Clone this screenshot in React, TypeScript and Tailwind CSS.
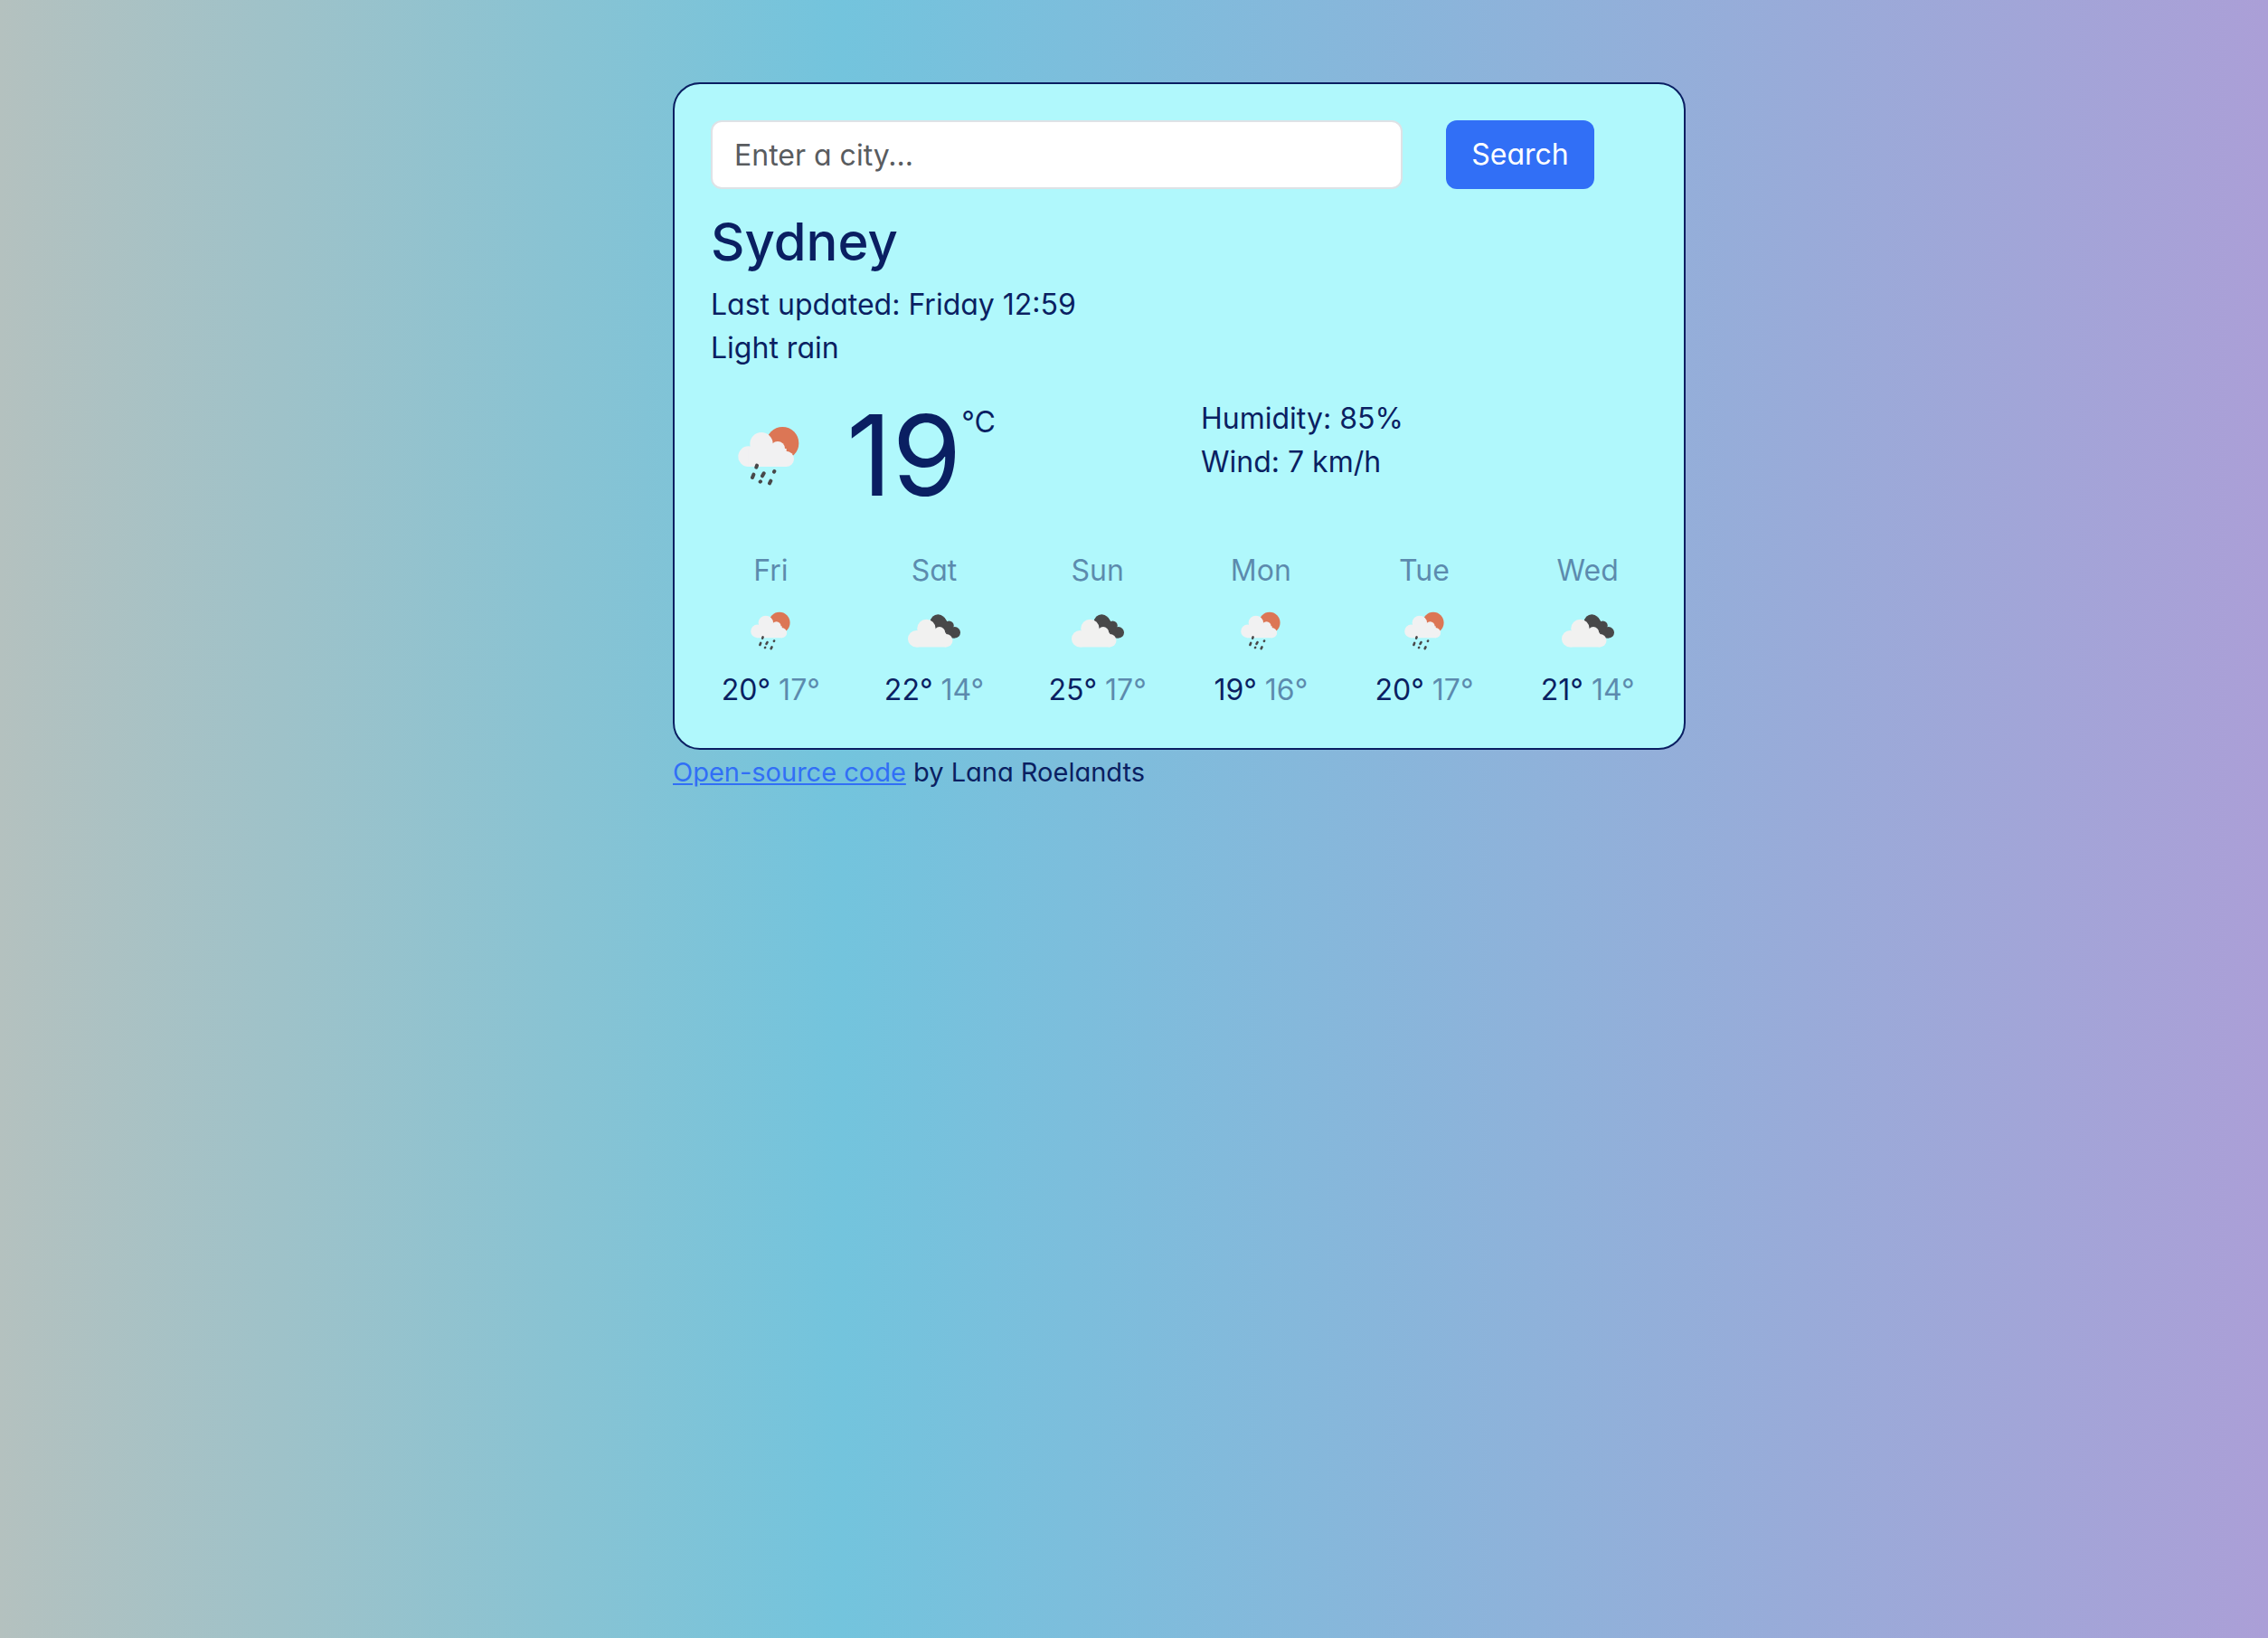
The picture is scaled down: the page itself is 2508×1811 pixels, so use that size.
import React from "react";

type Kind = "rain" | "clouds";

function Rain({ className }: { className: string }) {
  return (
    <svg viewBox="0 0 204 198" className={className} role="img" aria-label="Light rain">
      <circle cx="148" cy="57" r="54" fill="#dc7655" />
      <g fill="#f1f1f2">
        <circle cx="35" cy="101" r="34" />
        <circle cx="78" cy="59" r="38" />
        <circle cx="132" cy="75" r="24" />
        <circle cx="160" cy="109" r="26" />
        <rect x="35" y="75" width="126" height="60" />
      </g>
      <g stroke="#484849" strokeWidth="12" strokeLinecap="round">
        <path d="M63 131l-2 6M52 161l-4 10M86 157l-5 9M121 150l-1 2M75 184l-1 1M109 182l-4 8" />
      </g>
    </svg>
  );
}

function Clouds({ className }: { className: string }) {
  return (
    <svg viewBox="0 0 176 111" className={className} role="img" aria-label="Broken clouds">
      <g fill="#484849">
        <circle cx="101" cy="26" r="26" />
        <circle cx="138" cy="38" r="16" />
        <circle cx="157" cy="61" r="19" />
        <path d="M84 30L122 10L150 50L157 80H120Z" />
      </g>
      <g fill="#f1f1f0">
        <circle cx="28" cy="82" r="28" />
        <circle cx="62" cy="48" r="31" />
        <circle cx="106" cy="61" r="19" />
        <circle cx="128" cy="88" r="22" />
        <rect x="28" y="62" width="100" height="48" />
      </g>
    </svg>
  );
}

const days: { day: string; kind: Kind; max: number; min: number }[] = [
  { day: "Fri", kind: "rain", max: 20, min: 17 },
  { day: "Sat", kind: "clouds", max: 22, min: 14 },
  { day: "Sun", kind: "clouds", max: 25, min: 17 },
  { day: "Mon", kind: "rain", max: 19, min: 16 },
  { day: "Tue", kind: "rain", max: 20, min: 17 },
  { day: "Wed", kind: "clouds", max: 21, min: 14 },
];

export default function App() {
  return (
    <div className="min-h-screen bg-[linear-gradient(90deg,#b4c1bf_0%,#73c4dd_37%,#ab9fd7_100%)] pt-[91px] pl-[100px] font-['Inter',sans-serif] text-[32px] leading-[48px] text-[#0a1f62] [font-feature-settings:'cv11']">
      <div className="mx-auto max-w-[1120px]">
        <main className="rounded-[30px] border-2 border-[#0a1f62] bg-[#b0f8fc] p-10">
          <form className="-mx-6 flex" onSubmit={(e) => e.preventDefault()}>
            <div className="w-3/4 px-6">
              <input
                type="search"
                aria-label="City"
                placeholder="Enter a city..."
                className="block h-[76px] w-full rounded-xl border-2 border-[#dee2e6] bg-white px-6 outline-none placeholder:text-[#595c5f]"
              />
            </div>
            <div className="w-1/4 px-6">
              <button type="submit" className="h-[76px] w-[164px] rounded-xl bg-[#316ff6] text-white">
                Search
              </button>
            </div>
          </form>
          <h1 className="mt-6 text-[58px] leading-[68px] font-medium">Sydney</h1>
          <ul className="mt-3">
            <li>Last updated: Friday 12:59</li>
            <li>Light rain</li>
          </ul>
          <div className="-mx-6 mt-[30px] flex">
            <div className="flex w-1/2 px-6">
              <Rain className="mt-8 ml-[30px] h-[66px] w-[68px] shrink-0" />
              <span className="ml-[52px] text-[124px] leading-[128px]">19</span>
              <span className="mt-1">°C</span>
            </div>
            <ul className="w-1/2 px-6">
              <li>Humidity: 85%</li>
              <li>Wind: 7 km/h</li>
            </ul>
          </div>
          <div className="-mx-6 mt-10 grid grid-cols-6 text-center">
            {days.map((d) => (
              <div key={d.day}>
                <div className="opacity-50">{d.day}</div>
                <div className="flex h-[84px] items-center justify-center">
                  {d.kind === "rain" ? <Rain className="h-[43px] w-[44px]" /> : <Clouds className="h-[37px] w-[58px]" />}
                </div>
                <div className="whitespace-nowrap">
                  {d.max}° <span className="opacity-50">{d.min}°</span>
                </div>
              </div>
            ))}
          </div>
        </main>
        <footer className="mt-1 text-[29px] leading-[42px]">
          <a href="#source" className="text-[#316ff6] underline">
            Open-source code
          </a>{" "}
          by Lana Roelandts
        </footer>
      </div>
    </div>
  );
}
